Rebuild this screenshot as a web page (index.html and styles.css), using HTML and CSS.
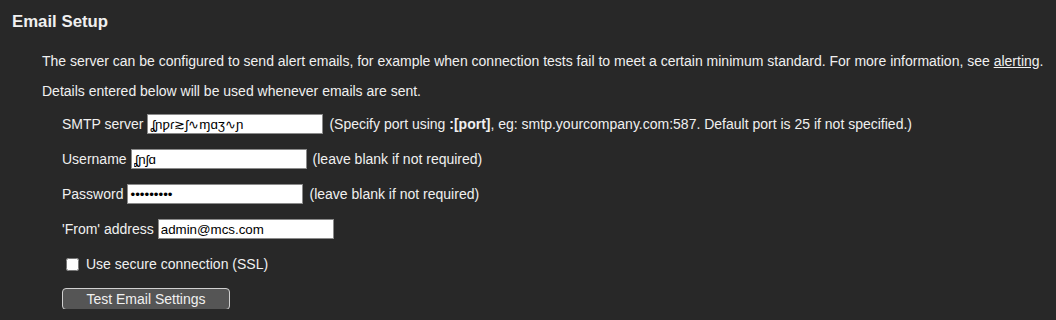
FILE: index.html
```html
<!DOCTYPE html>
<html lang="en">
<head>
  <meta charset="UTF-8">
  <meta name="viewport" content="width=device-width, initial-scale=1.0">
  <title>Email Setup</title>
  <link rel="stylesheet" href="styles.css">
</head>
<body>
  <h2 class="title">Email Setup</h2>

  <div class="intro">
    <p>The server can be configured to send alert emails, for example when connection tests fail to meet a certain minimum standard. For more information, see <a href="#">alerting</a>.</p>
    <p>Details entered below will be used whenever emails are sent.</p>
  </div>

  <form class="email-form">
    <div class="row">
      <label for="smtp">SMTP server</label>
      <input type="text" id="smtp" value="ʆɲƿɾ≳ʃ∿ɱɑʒ∿ɲ">
      <span class="hint">(Specify port using <b>:[port]</b>, eg: smtp.yourcompany.com:587. Default port is 25 if not specified.)</span>
    </div>
    <div class="row">
      <label for="user">Username</label>
      <input type="text" id="user" value="ʆɲʃɑ">
      <span class="hint">(leave blank if not required)</span>
    </div>
    <div class="row">
      <label for="pass">Password</label>
      <input type="password" id="pass" value="xxxxxxxxx">
      <span class="hint">(leave blank if not required)</span>
    </div>
    <div class="row">
      <label for="from">'From' address</label>
      <input type="text" id="from" value="admin@mcs.com">
    </div>
    <div class="row">
      <label class="check"><input type="checkbox" id="ssl"> Use secure connection (SSL)</label>
    </div>
    <div class="row">
      <button type="button" id="test-btn">Test Email Settings</button>
    </div>
  </form>
</body>
</html>
```

FILE: styles.css
```css
* {
    margin: 0;
    padding: 0;
}

body {
    background-color: #282828;
    color: #f0f0f0;
    font-family: "Liberation Sans", Arial, sans-serif;
    font-size: 14px;
}

.title {
    font-size: 16.8px;
    font-weight: bold;
    padding: 12px 0 0 12px;
}

.intro {
    padding: 21px 0 0 42px;
}

.intro p {
    margin-bottom: 14px;
}

.intro a {
    color: #f0f0f0;
}

.email-form {
    padding: 1px 0 0 62px;
    display: flex;
    flex-direction: column;
    gap: 15px;
}

.row {
    display: flex;
    align-items: center;
    height: 20px;
    gap: 4px;
}

.row input[type="text"],
.row input[type="password"] {
    box-sizing: border-box;
    width: 176px;
    height: 20px;
    padding: 1px 2px;
    border: 1px solid #8a8a8a;
    background: white;
    color: black;
    font-family: "Liberation Sans", Arial, sans-serif;
    font-size: 13.33px;
}

.hint {
    margin-left: 2px;
}

.check {
    display: flex;
    align-items: center;
}

.check input {
    width: 13px;
    height: 13px;
    margin: 0 7px 0 4px;
}

#test-btn {
    width: 168px;
    height: 22px;
    background-color: #555;
    color: #f0f0f0;
    border: 1px solid #d0d0d0;
    border-radius: 4px;
    font-family: "Liberation Sans", Arial, sans-serif;
    font-size: 14px;
    cursor: pointer;
}

#test-btn:hover {
    background-color: #666;
}
```
